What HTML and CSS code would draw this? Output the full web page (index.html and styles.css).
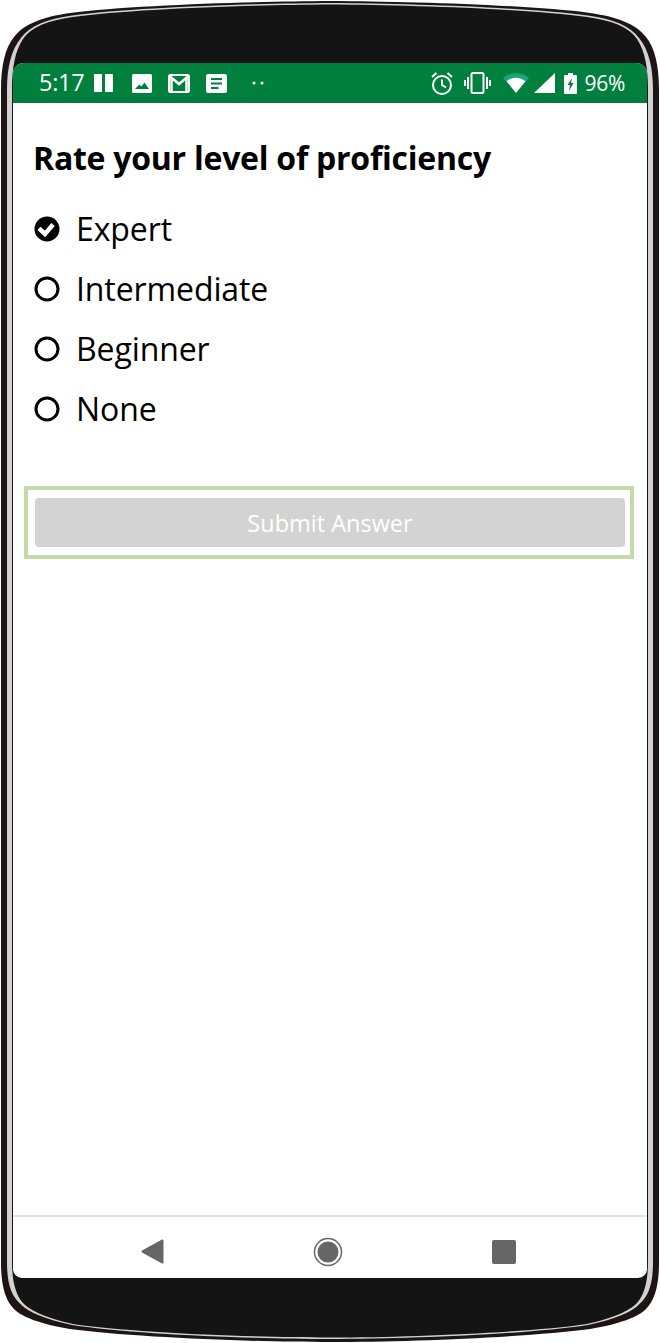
FILE: index.html
```html
<!DOCTYPE html>
<html lang="en">
<head>
<meta charset="utf-8">
<title>Rate your level of proficiency</title>
<link rel="stylesheet" href="styles.css">
</head>
<body>
<div class="device">
  <svg class="bezel" viewBox="0 0 660 1343" aria-hidden="true">
    <path class="bezel-outer" d="M330 1C250 1.500 130 5 70 13C42 17 24 24 14 37C5 48 1 66 1 90V1262C1 1285 5 1300 14 1309C22 1317 40 1324 70 1329C130 1337 250 1342 330 1342C410 1342 530 1337 590 1329C620 1324 638 1317 646 1309C655 1300 659 1285 659 1262V90C659 66 655 48 646 37C636 24 618 17 590 13C530 5 410 1.500 330 1Z"/>
    <path class="bezel-light" d="M330 3C250 3.500 130 7.500 72 15.500C47 19 29.500 26 21 38C11 50 7 68 7 90V1262C7 1283 11 1296 21 1304.500C29 1312.500 45 1319 72 1325C130 1334 250 1339 330 1339C410 1339 530 1334 588 1325C615 1319 631 1312.500 639 1304.500C649 1296 653 1283 653 1262V90C653 68 649 50 639 38C630.500 26 613 19 588 15.500C530 7.500 410 3.500 330 3Z"/>
    <path class="bezel-face" d="M330 4.500C250 5 130 9 73 17C48 20.500 31 27 23 39C15 51 12 68 12 90V1262C12 1282 16 1295 23 1303C31 1311 46 1318 73 1324C130 1332.500 250 1337.500 330 1337.500C410 1337.500 530 1332.500 587 1324C614 1318 629 1311 637 1303C644 1295 648 1282 648 1262V90C648 68 645 51 637 39C629 27 612 20.500 587 17C530 9 410 5 330 4.500Z"/>
  </svg>

  <div class="screen">
    <header class="status">
      <div class="status-left">
        <span class="time">5:17</span>
        <svg class="ic ic-pause" viewBox="0 0 19 18"><path d="M0 0h8v18H0zM11 0h8v18h-8z"/></svg>
        <svg class="ic ic-pic" viewBox="0 0 20 19"><path fill-rule="evenodd" d="M1.500 0h17A1.500 1.500 0 0 1 20 1.500v16a1.500 1.500 0 0 1-1.500 1.500h-17A1.500 1.500 0 0 1 0 17.500v-16A1.500 1.500 0 0 1 1.500 0ZM3 15h14l-4.500-6.500L9.300 12.500 7.200 10.500Z"/></svg>
        <svg class="ic ic-mail" viewBox="0 0 22 19"><rect class="line" x="1" y="1" width="20" height="17" rx="1.500"/><path class="line thick" d="M2 2.500 11 10l9-7.500M3.500 4v14M18.500 4v14"/></svg>
        <svg class="ic ic-doc" viewBox="0 0 21 19"><path fill-rule="evenodd" d="M2 0h17a2 2 0 0 1 2 2v15a2 2 0 0 1-2 2H2a2 2 0 0 1-2-2V2a2 2 0 0 1 2-2ZM5 4v2h11V4ZM5 8.500v2h11v-2ZM5 13v2h7.500v-2Z"/></svg>
        <svg class="ic ic-dots" viewBox="0 0 12 4"><circle cx="2" cy="2" r="1.500"/><circle cx="10" cy="2" r="1.500"/></svg>
      </div>
      <div class="status-right">
        <svg class="ic ic-alarm" viewBox="0 0 22 23"><circle class="line" cx="11" cy="13" r="9"/><path class="line" d="M11 7.500V13l4 2.500M1 5l4.500-4M21 5l-4.500-4"/></svg>
        <svg class="ic ic-vib" viewBox="0 0 27 22"><rect class="line" x="7.500" y="1" width="12" height="20" rx="1.500"/><path class="line" d="M4 5v12M1 8v6M23 5v12M26 8v6"/></svg>
        <svg class="ic ic-wifi" viewBox="0 0 26 20"><path class="wifi-dim" d="M0 5C7-1.500 19-1.500 26 5L23 8.500H3Z"/><path d="M3.500 8.200C9 3.500 17 3.500 22.500 8.200L13 20Z"/></svg>
        <svg class="ic ic-signal" viewBox="0 0 21 20"><path d="M21 0v20H0Z"/></svg>
        <svg class="ic ic-batt" viewBox="0 0 13 21"><path fill-rule="evenodd" d="M4 0h5v2h3a1 1 0 0 1 1 1v17a1 1 0 0 1-1 1H1a1 1 0 0 1-1-1V3a1 1 0 0 1 1-1h3ZM8 5 3.500 12h2.500L5 18l4.500-8H7Z"/></svg>
        <span class="pct">96%</span>
      </div>
    </header>

    <main class="content">
      <h1 class="title">Rate your level of proficiency</h1>
      <ul class="options">
        <li class="option">
          <svg class="radio" viewBox="0 0 26 26"><circle cx="13" cy="13" r="12.500"/><path class="tick" d="M5 12.300 11 18 19 8.500"/></svg>
          <span>Expert</span>
        </li>
        <li class="option">
          <svg class="radio" viewBox="0 0 26 26"><circle class="ring" cx="13" cy="13" r="11"/></svg>
          <span>Intermediate</span>
        </li>
        <li class="option">
          <svg class="radio" viewBox="0 0 26 26"><circle class="ring" cx="13" cy="13" r="11"/></svg>
          <span>Beginner</span>
        </li>
        <li class="option">
          <svg class="radio" viewBox="0 0 26 26"><circle class="ring" cx="13" cy="13" r="11"/></svg>
          <span>None</span>
        </li>
      </ul>
      <div class="submit-frame">
        <button class="submit" type="button" disabled>Submit Answer</button>
      </div>
    </main>

    <nav class="navbar">
      <svg class="nav-ic nav-back" viewBox="0 0 23 25"><path d="M21.500 1.500V23.500L1.500 12.500Z"/></svg>
      <svg class="nav-ic nav-home" viewBox="0 0 30 30"><circle class="home-ring" cx="15" cy="15" r="13.500"/><circle cx="15" cy="15" r="10.500"/></svg>
      <svg class="nav-ic nav-recent" viewBox="0 0 24 24"><rect width="24" height="24" rx="2"/></svg>
    </nav>
  </div>
</div>
</body>
</html>
```
FILE: styles.css
```css
* { box-sizing: border-box; }
html, body { margin: 0; padding: 0; background: #fff; }
body { font-family: "Open Sans", "Noto Sans", "Liberation Sans", sans-serif; }

.device {
  position: relative;
  width: 660px;
  height: 1343px;
  padding: 63px 13px 65px;
}
.bezel { position: absolute; inset: 0; width: 660px; height: 1343px; }
.bezel-outer { fill: #1d1415; }
.bezel-light { fill: #d2d2d2; }
.bezel-face { fill: #141414; }

.screen {
  position: relative;
  height: 100%;
  background: #fff;
  border-radius: 11px 11px 9px 9px;
  overflow: hidden;
  display: flex;
  flex-direction: column;
}

.status {
  flex: none;
  height: 40px;
  background: #00803c;
  color: #fff;
  display: flex;
  justify-content: space-between;
  align-items: center;
  padding: 0 22px 0 26px;
}
.status-left, .status-right { display: flex; align-items: center; }
.time { font-size: 23.500px; line-height: 1; width: 55px; letter-spacing: -0.3px; }
.pct { font-size: 21px; line-height: 1; margin-left: 8px; letter-spacing: -0.3px; }

.ic { display: block; fill: #fff; flex: none; }
.ic .line { fill: none; stroke: #fff; stroke-width: 2; }
.ic .line.thick { stroke-width: 2.500; }
.ic .wifi-dim { fill: #17a67c; }
.ic-pause { width: 19px; height: 18px; }
.ic-pic { width: 20px; height: 19px; margin-left: 19px; }
.ic-mail { width: 22px; height: 19px; margin-left: 16px; }
.ic-doc { width: 21px; height: 19px; margin-left: 16px; }
.ic-dots { width: 12px; height: 4px; margin-left: 25px; }
.ic-alarm { width: 22px; height: 23px; }
.ic-vib { width: 27px; height: 22px; margin-left: 11px; }
.ic-wifi { width: 26px; height: 20px; margin-left: 12px; }
.ic-signal { width: 21px; height: 20px; margin-left: 5px; }
.ic-batt { width: 13px; height: 21px; margin-left: 9px; }

.content { flex: 1; padding: 34px 13px 0 11px; }
.title {
  margin: 0 0 0 9px;
  font-size: 32px;
  line-height: 42px;
  font-weight: 700;
  color: #000;
  letter-spacing: -0.25px;
}
.options { list-style: none; margin: 20px 0 0 8px; padding: 0; }
.option {
  display: flex;
  align-items: center;
  height: 60px;
  font-size: 32px;
  letter-spacing: -0.1px;
  color: #000;
}
.option span { position: relative; top: -1px; }
.radio { width: 26px; height: 26px; margin: 0 16px 0 2px; flex: none; }
.radio .ring { fill: none; stroke: #000; stroke-width: 3; }
.radio .tick { fill: none; stroke: #fff; stroke-width: 4.500; }

.submit-frame {
  margin-top: 47px;
  height: 73px;
  border: 4px solid #c5d9a9;
  padding: 8px 5px 8px 7px;
}
.submit {
  display: block;
  width: 100%;
  height: 49px;
  border: 0;
  border-radius: 4px;
  background: #d3d3d3;
  color: #fff;
  font: inherit;
  font-size: 23.500px;
}

.navbar {
  flex: none;
  height: 63px;
  border-top: 2px solid #e2e2e2;
  display: flex;
  align-items: center;
  padding-top: 8px;
}
.nav-ic { display: block; flex: none; fill: #666; }
.nav-back { width: 23px; height: 25px; margin-left: 128px; stroke: #666; stroke-width: 2; stroke-linejoin: round; }
.nav-home { width: 30px; height: 30px; margin-left: 149px; stroke: none; }
.home-ring { fill: none; stroke: #666; stroke-width: 1.500; }
.nav-recent { width: 24px; height: 24px; margin-left: 149px; }
```
